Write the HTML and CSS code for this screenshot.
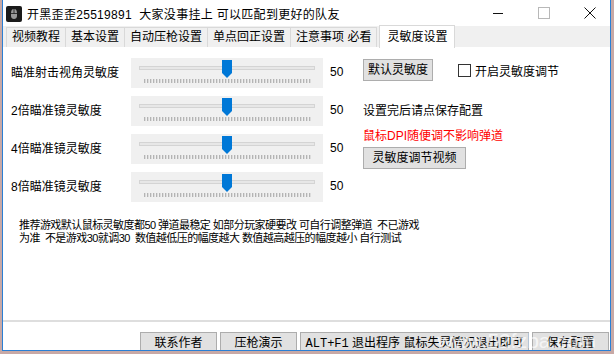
FILE: index.html
```html
<!DOCTYPE html>
<html lang="zh-CN">
<head>
  <meta charset="UTF-8" />
  <title>开黑歪歪</title>
  <link rel="stylesheet" href="styles.css">
</head>
<body>
  <div class="window">
    <div class="titlebar">
      <span class="app-icon">
        <svg width="16" height="16" viewBox="0 0 16 16">
          <rect width="16" height="16" rx="2" fill="#1b1b1b"/>
          <path d="M8 3C5.6 3 5 5 5 7.5V10c0 2 1.3 3 3 3s3-1 3-3V7.5C11 5 10.4 3 8 3Z" fill="#9a9a9a"/>
          <path d="M8 3V7.5M5 7.5H11" stroke="#1b1b1b" stroke-width="0.8" fill="none"/>
        </svg>
      </span>
      <span class="title">开黑歪歪25519891&nbsp; 大家没事挂上 可以匹配到更好的队友</span>
      <div class="controls">
        <span class="ctl"><svg width="12" height="12" viewBox="0 0 12 12"><path d="M1 6.5H11" stroke="#111" stroke-width="1"/></svg></span>
        <span class="ctl"><svg width="12" height="12" viewBox="0 0 12 12"><rect x="0.5" y="0.5" width="11" height="11" fill="none" stroke="#b8b8b8"/></svg></span>
        <span class="ctl"><svg width="12" height="12" viewBox="0 0 12 12"><path d="M0.5 0.5L11.5 11.5M11.5 0.5L0.5 11.5" stroke="#111" stroke-width="1"/></svg></span>
      </div>
    </div>

    <div class="tabs">
      <div class="tab">视频教程</div>
      <div class="tab">基本设置</div>
      <div class="tab">自动压枪设置</div>
      <div class="tab">单点回正设置</div>
      <div class="tab">注意事项 必看</div>
      <div class="tab active">灵敏度设置</div>
    </div>

    <div class="panel">
      <div class="main">
        <div class="sliders">
          <div class="row">
            <span class="label">瞄准射击视角灵敏度</span>
            <div class="slider"><div class="track"></div><div class="ticks"></div><svg class="thumb" width="10" height="19" viewBox="0 0 10 19"><path d="M0 0H10V13L5 18L0 13Z" fill="#0078d7"/></svg></div>
            <span class="value">50</span>
          </div>
          <div class="row">
            <span class="label">2倍瞄准镜灵敏度</span>
            <div class="slider"><div class="track"></div><div class="ticks"></div><svg class="thumb" width="10" height="19" viewBox="0 0 10 19"><path d="M0 0H10V13L5 18L0 13Z" fill="#0078d7"/></svg></div>
            <span class="value">50</span>
          </div>
          <div class="row">
            <span class="label">4倍瞄准镜灵敏度</span>
            <div class="slider"><div class="track"></div><div class="ticks"></div><svg class="thumb" width="10" height="19" viewBox="0 0 10 19"><path d="M0 0H10V13L5 18L0 13Z" fill="#0078d7"/></svg></div>
            <span class="value">50</span>
          </div>
          <div class="row">
            <span class="label">8倍瞄准镜灵敏度</span>
            <div class="slider"><div class="track"></div><div class="ticks"></div><svg class="thumb" width="10" height="19" viewBox="0 0 10 19"><path d="M0 0H10V13L5 18L0 13Z" fill="#0078d7"/></svg></div>
            <span class="value">50</span>
          </div>
        </div>

        <div class="side">
          <div class="side-top">
            <button class="btn btn-default">默认灵敏度</button>
            <label class="check"><span class="box"></span>开启灵敏度调节</label>
          </div>
          <div class="hint">设置完后请点保存配置</div>
          <div class="warn">鼠标DPI随便调不影响弹道</div>
          <button class="btn btn-video">灵敏度调节视频</button>
        </div>
      </div>

      <p class="note">推荐游戏默认鼠标灵敏度都50 弹道最稳定 如部分玩家硬要改 可自行调整弹道  不已游戏<br>为准  不是游戏30就调30  数值越低压的幅度越大 数值越高越压的幅度越小 自行测试</p>
    </div>

    <div class="footer">
      <button class="btn btn-foot">联系作者</button>
      <button class="btn btn-foot">压枪演示</button>
      <button class="btn btn-foot btn-wide"><span class="mono">ALT+F1</span> 退出程序 鼠标失灵情况退出即可</button>
      <button class="btn btn-foot">保存配置</button>
    </div>
    <span class="watermark">www.52fzba.com</span>
  </div>
</body>
</html>
```

FILE: styles.css
```css
body {
  margin: 0;
  background: #c8a9a6;
  font-family: "Liberation Sans", "Noto Sans CJK SC", sans-serif;
  font-size: 12px;
  color: #000;
}
.window {
  position: relative;
  box-sizing: border-box;
  margin-left: 2px;
  width: 609px;
  height: 351px;
  background: #fff;
  border: 1px solid #2b7fd4;
  border-top: none;
  overflow: hidden;
}

/* title bar */
.titlebar {
  height: 26px;
  display: flex;
  align-items: center;
  background: #fff;
}
.app-icon {
  display: flex;
  margin-left: 3px;
  margin-top: 1px;
}
.title {
  margin-left: 5px;
  font-size: 12px;
  letter-spacing: 0.3px;
  color: #000;
}
.controls {
  margin-left: auto;
  display: flex;
  align-items: center;
  margin-right: 14px;
}
.ctl {
  display: flex;
  margin-left: 34px;
}

/* tabs */
.tabs {
  height: 21px;
  background: #f0f0f0;
  display: flex;
  align-items: flex-end;
  padding-left: 3px;
  box-sizing: border-box;
}
.tab {
  height: 20px;
  line-height: 19px;
  box-sizing: border-box;
  padding: 0 5px;
  border: 1px solid #d9d9d9;
  border-bottom: none;
  margin-right: -1px;
  background: #f0f0f0;
  white-space: pre;
  font-size: 12px;
}
.tab.active {
  height: 23px;
  margin-bottom: -1px;
  margin-left: 3px;
  padding: 0 7px;
  line-height: 22px;
  background: #fff;
  position: relative;
}

/* panel */
.panel {
  height: 262px;
  border-bottom: 2px solid #dedede;
  padding: 11px 0 0 8px;
}
.main {
  display: flex;
}
.sliders {
  display: flex;
  flex-direction: column;
  gap: 8px;
}
.row {
  display: flex;
  align-items: center;
  height: 30px;
}
.label {
  width: 120px;
  font-size: 12px;
  margin-top: -3px;
}
.slider {
  position: relative;
  width: 192px;
  height: 30px;
  background: #f0f0f0;
}
.track {
  position: absolute;
  left: 8px;
  right: 8px;
  top: 8px;
  height: 2px;
  background: #e7e7e7;
  border: 1px solid #d4d4d4;
}
.ticks {
  position: absolute;
  left: 13px;
  width: 167px;
  top: 21px;
  height: 4px;
  background: repeating-linear-gradient(to right, #b4b4b4 0 1px, #dcdcdc 1px 2px, #f0f0f0 2px 3px);
}
.thumb {
  position: absolute;
  left: 91px;
  top: 2px;
}
.value {
  margin-left: 7px;
  width: 33px;
  margin-top: -3px;
}

.side {
  display: flex;
  flex-direction: column;
  align-items: flex-start;
  padding-top: 1px;
}
.side-top {
  display: flex;
  align-items: center;
}
.btn {
  font-family: "Liberation Sans", "Noto Sans CJK SC", sans-serif;
  font-size: 12px;
  background: #e1e1e1;
  border: 1px solid #adadad;
  padding: 0;
  color: #000;
  height: 22px;
  line-height: 20px;
}
.btn-default {
  width: 70px;
}
.check {
  display: flex;
  align-items: center;
  margin-left: 25px;
  font-size: 12px;
}
.box {
  width: 11px;
  height: 11px;
  border: 1px solid #333;
  background: #fff;
  margin-right: 4px;
}
.hint {
  margin-top: 22px;
  line-height: 17px;
}
.warn {
  margin-top: 8px;
  color: #ff0000;
  line-height: 17px;
}
.btn-video {
  width: 103px;
  margin-top: 2px;
}

.note {
  margin: 17px 0 0 8px;
  font-size: 11px;
  letter-spacing: -0.55px;
  line-height: 13px;
  white-space: pre;
}

/* footer */
.footer {
  height: 28px;
  display: flex;
  justify-content: flex-end;
  align-items: flex-start;
  gap: 3px;
  padding-right: 1px;
  box-sizing: border-box;
  padding-top: 10px;
}
.btn-foot {
  width: 77px;
  flex: none;
  height: 22px;
}
.btn-wide {
  width: 229px;
}
.mono {
  font-family: "Liberation Mono", monospace;
  font-size: 12px;
}
.watermark {
  position: absolute;
  right: 14px;
  bottom: -3px;
  font-family: "Liberation Sans", sans-serif;
  font-size: 21px;
  color: rgba(255, 255, 255, 0.7);
  pointer-events: none;
}
```
